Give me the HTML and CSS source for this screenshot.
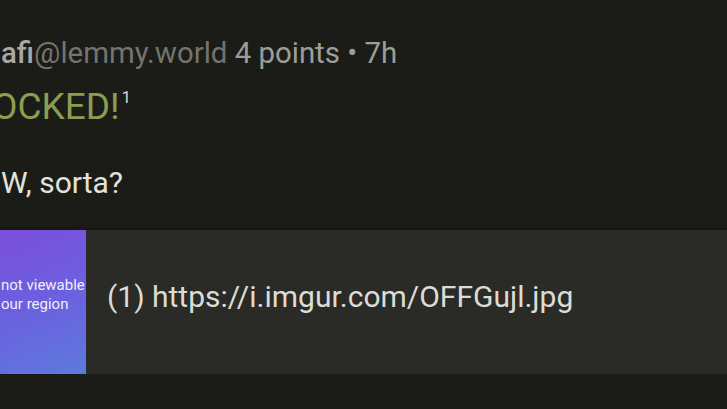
FILE: index.html
```html
<!DOCTYPE html>
<html lang="en">
<head>
<meta charset="utf-8">
<title>Comment</title>
<link rel="stylesheet" href="styles.css">
</head>
<body>
<div class="comment">
  <div class="meta"><span class="user">afi</span><span class="instance">@lemmy.world</span> <span class="score">4 points • 7h</span></div>
  <h1 class="heading">OCKED!<sup class="fn">1</sup></h1>
  <p class="body">W, sorta?</p>
  <div class="link-card">
    <div class="thumb"><span class="thumb-text">not viewable<br>our region</span></div>
    <div class="link-text">(1) https://i.imgur.com/OFFGujl.jpg</div>
  </div>
</div>
</body>
</html>
```
FILE: styles.css
```css
html, body {
  margin: 0;
  padding: 0;
  background: #1b1c18;
  overflow: hidden;
  width: 727px;
  height: 409px;
}
.comment {
  font-family: Roboto, "Noto Sans", sans-serif;
  padding-top: 36px;
}
.meta {
  font-size: 29.4px;
  line-height: 34px;
  height: 34px;
  padding-left: 1px;
  white-space: nowrap;
  color: #9e9e98;
}
.user {
  color: #a9a9a3;
  font-weight: 500;
}
.instance {
  color: #74746e;
}
.score {
  color: #9e9e98;
}
.heading {
  margin: 15px 0 0 0;
  font-size: 37px;
  line-height: 44px;
  height: 44px;
  font-weight: 400;
  color: #8d9d4f;
  text-indent: -8px;
  white-space: nowrap;
}
.fn {
  font-size: 17px;
  line-height: 0;
  vertical-align: 0.95em;
  color: #d8d8d2;
  margin-left: 2px;
}
.body {
  margin: 36px 0 0 0;
  font-size: 30px;
  line-height: 36px;
  height: 36px;
  padding-left: 1px;
  color: #e2e2dd;
}
.link-card {
  margin-top: 29px;
  height: 144px;
  background: #2a2b27;
  display: flex;
  align-items: center;
  box-shadow: 0 -2px 3px rgba(0, 0, 0, 0.25);
}
.thumb {
  width: 86px;
  height: 144px;
  flex: 0 0 86px;
  background: linear-gradient(160deg, #7b4fdb 0%, #6a62df 55%, #5d7ade 100%);
  display: flex;
  align-items: center;
  overflow: hidden;
}
.thumb-text {
  font-size: 15px;
  line-height: 19px;
  color: #f0eefa;
  white-space: nowrap;
  padding-left: 1px;
  padding-bottom: 14px;
}
.link-text {
  padding-left: 21px;
  padding-bottom: 10px;
  font-size: 30px;
  line-height: 36px;
  color: #dcdcd7;
  white-space: nowrap;
}
```
